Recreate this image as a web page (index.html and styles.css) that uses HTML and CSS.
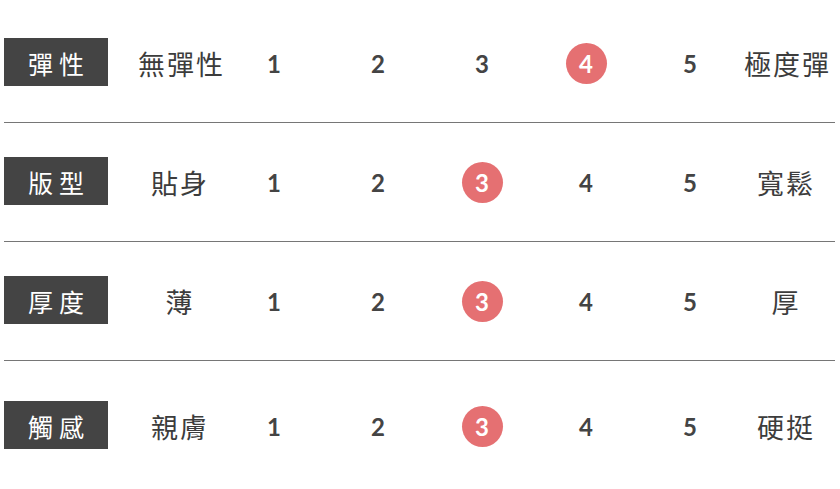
FILE: index.html
```html
<!DOCTYPE html>
<html lang="zh-Hant">
<head>
<meta charset="utf-8">
<link rel="stylesheet" href="styles.css">
</head>
<body>
<div class="table">
  <div class="row">
    <div class="label">彈性</div>
    <div class="desc">無彈性</div>
    <div class="num">1</div>
    <div class="num">2</div>
    <div class="num">3</div>
    <div class="num"><span class="dot">4</span></div>
    <div class="num">5</div>
    <div class="desc">極度彈</div>
  </div>
  <div class="row">
    <div class="label">版型</div>
    <div class="desc">貼身</div>
    <div class="num">1</div>
    <div class="num">2</div>
    <div class="num"><span class="dot">3</span></div>
    <div class="num">4</div>
    <div class="num">5</div>
    <div class="desc">寬鬆</div>
  </div>
  <div class="row">
    <div class="label">厚度</div>
    <div class="desc">薄</div>
    <div class="num">1</div>
    <div class="num">2</div>
    <div class="num"><span class="dot">3</span></div>
    <div class="num">4</div>
    <div class="num">5</div>
    <div class="desc">厚</div>
  </div>
  <div class="row last">
    <div class="label">觸感</div>
    <div class="desc">親膚</div>
    <div class="num">1</div>
    <div class="num">2</div>
    <div class="num"><span class="dot">3</span></div>
    <div class="num">4</div>
    <div class="num">5</div>
    <div class="desc">硬挺</div>
  </div>
</div>
</body>
</html>
```

FILE: styles.css
```css
html, body {
  margin: 0;
  padding: 0;
  background: #ffffff;
}

.table {
  padding: 4px 5px 0 4px;
}

.row {
  display: grid;
  grid-template-columns: 132px 86px repeat(5, 104px) 86px;
  align-items: center;
  padding: 34px 0 36px;
  border-bottom: 1px solid #767676;
}

.row.second {
  padding-top: 32px;
  padding-bottom: 38px;
}

.row.last {
  border-bottom: none;
  padding-top: 40px;
}

.label {
  width: 104px;
  height: 48px;
  background: #444444;
  color: #ffffff;
  display: flex;
  align-items: center;
  justify-content: center;
  font-family: "Noto Sans CJK TC", "Noto Sans", sans-serif;
  font-size: 25px;
  letter-spacing: 6px;
  text-indent: 6px;
  padding-top: 2px;
  box-sizing: border-box;
}

.desc {
  text-align: center;
  font-family: "Noto Sans CJK TC", "Noto Sans", sans-serif;
  font-size: 27px;
  font-weight: 400;
  letter-spacing: 2px;
  text-indent: 2px;
  color: #3c3c3c;
  white-space: nowrap;
  padding-top: 2px;
}

.num {
  display: flex;
  justify-content: center;
  align-items: center;
  font-family: "Lato", "Noto Sans", sans-serif;
  font-weight: 700;
  font-size: 24px;
  color: #444444;
  height: 48px;
  padding-top: 2px;
  box-sizing: border-box;
}

.dot {
  width: 41px;
  height: 41px;
  border-radius: 50%;
  background: #e57072;
  color: #ffffff;
  display: flex;
  align-items: center;
  justify-content: center;
}
```
